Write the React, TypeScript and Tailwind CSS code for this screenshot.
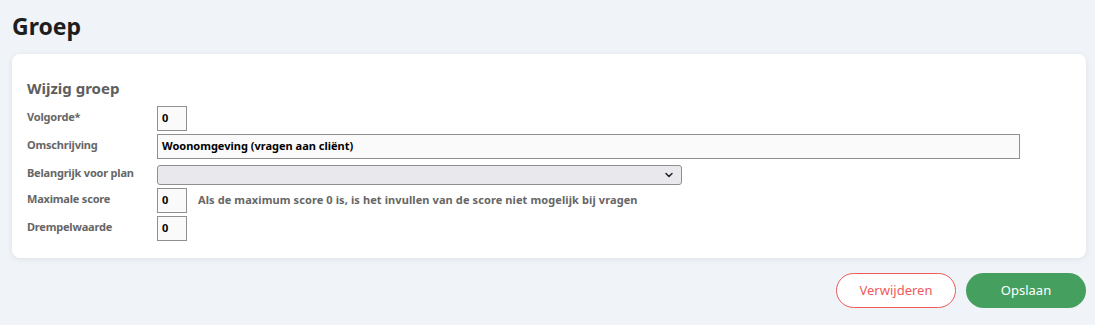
import { ChevronDown } from "lucide-react";

const font = { fontFamily: '"Noto Sans", "Liberation Sans", sans-serif' };

function Row({ label, children }: { label: string; children: React.ReactNode }) {
  return (
    <div className="flex items-start">
      <div className="w-[130px] shrink-0 pt-[3px] text-[11px] font-bold tracking-[-0.2px] text-[#666]">{label}</div>
      {children}
    </div>
  );
}

function SmallInput({ value }: { value: string }) {
  return (
    <div className="w-[30px] h-[25px] border border-[#8f8f8f] bg-[#fafafa] px-[4px] flex items-center text-[11px] font-bold text-black">
      {value}
    </div>
  );
}

export default function App() {
  return (
    <div className="min-h-[325px] bg-[#f0f3f7] pl-3 pr-[9px] pt-[12px] pb-4" style={font}>
      <h1 className="text-[23px] font-bold text-[#1e1e1e] leading-7">Groep</h1>

      <div className="mt-[14px] bg-white rounded-lg shadow-[0_1px_6px_rgba(0,0,0,0.08)] px-[15px] pt-[22px] pb-[17px]">
        <h2 className="text-[15px] font-bold text-[#5e5e5e] leading-6 mb-[6px]">Wijzig groep</h2>
        <div className="flex flex-col gap-[3px]">
          <Row label="Volgorde*">
            <SmallInput value="0" />
          </Row>
          <Row label="Omschrijving">
            <div className="w-[863px] h-[25px] border border-[#8f8f8f] bg-[#fafafa] px-[4px] flex items-center text-[11px] font-bold text-black">
              Woonomgeving (vragen aan cliënt)
            </div>
          </Row>
          <Row label="Belangrijk voor plan">
            <div className="mt-[3px] w-[525px] h-[20px] border border-[#8f8f8f] rounded-[3px] bg-[#e9e8ed] flex items-center justify-end pr-[6px]">
              <ChevronDown size={12} strokeWidth={3} className="text-[#222]" />
            </div>
          </Row>
          <Row label="Maximale score">
            <div className="flex items-center gap-[11px]">
              <SmallInput value="0" />
              <span className="text-[11px] font-bold tracking-[0.1px] text-[#666]">
                Als de maximum score 0 is, is het invullen van de score niet mogelijk bij vragen
              </span>
            </div>
          </Row>
          <Row label="Drempelwaarde">
            <SmallInput value="0" />
          </Row>
        </div>
      </div>

      <div className="flex justify-end gap-[10px] mt-[15px]">
        <button className="w-[120px] h-[35px] rounded-full border border-[#f05a5a] bg-white text-[#f05a5a] text-[13px]">
          Verwijderen
        </button>
        <button className="w-[120px] h-[35px] rounded-full bg-[#45a05f] text-white text-[13px]">
          Opslaan
        </button>
      </div>
    </div>
  );
}
